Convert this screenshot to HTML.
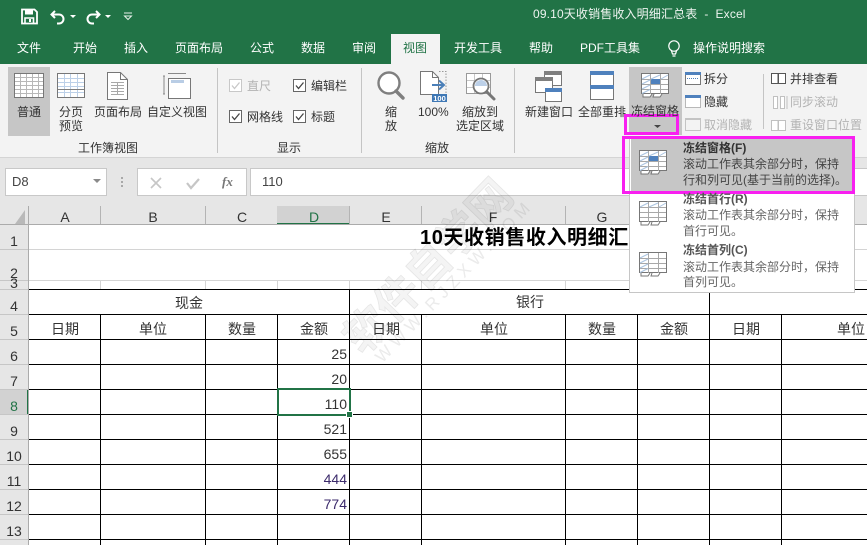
<!DOCTYPE html>
<html lang="zh"><head><meta charset="utf-8"><title>Excel</title>
<style>
html,body{margin:0;padding:0;width:867px;height:545px;overflow:hidden;background:#fff}
#p{position:relative;width:867px;height:545px;overflow:hidden;font-family:"Liberation Sans","Noto Sans CJK SC",sans-serif;font-size:12px;color:#333}
svg.b{position:absolute;left:0;top:0}
.t{position:absolute;white-space:nowrap;line-height:16px;height:16px}
.c{transform:translateX(-50%)}
.r{transform:translateX(-100%)}
.w{color:#fff}
.g{color:#b3b3b3}
.m{color:#666}
.h{font-size:14px;color:#333}
.n{font-size:14px;color:#333}
.k{font-size:14px;color:#333}
#wm{position:absolute;left:0;top:0;width:867px;height:545px;pointer-events:none;mix-blend-mode:multiply}
</style></head><body><div id="p">
<svg class="b" width="867" height="545" viewBox="0 0 867 545" shape-rendering="crispEdges">
<!-- backgrounds -->
<rect width="867" height="64" fill="#217346"/>
<rect x="391" y="34" width="49" height="30" fill="#f3f3f3"/>
<rect y="64" width="867" height="93" fill="#f3f3f3"/>
<rect y="157" width="867" height="48" fill="#e6e6e6"/>
<rect y="157" width="867" height="1" fill="#d4d4d4"/>
<rect x="5.500" y="168.500" width="101" height="27" fill="#fff" stroke="#c8c8c8"/>
<path d="M93 179h8l-4 4z" fill="#8a8a8a" shape-rendering="auto"/>
<rect x="137.500" y="168.500" width="109" height="27" fill="#fff" stroke="#c8c8c8"/>
<rect x="250.500" y="168.500" width="620" height="27" fill="#fff" stroke="#c8c8c8"/>
<g fill="#a8a8a8"><rect x="121" y="177" width="2" height="2"/><rect x="121" y="181" width="2" height="2"/><rect x="121" y="185" width="2" height="2"/></g>
<path d="M151 178l10 10M161 178l-10 10" stroke="#c6c6c6" stroke-width="1.600" shape-rendering="auto" fill="none"/>
<path d="M187 183l4 5 8-9" stroke="#c6c6c6" stroke-width="2.200" shape-rendering="auto" fill="none"/>
<!-- headers -->
<rect y="205" width="867" height="19" fill="#e6e6e6"/>
<rect x="0" y="224" width="28" height="321" fill="#e6e6e6"/>
<path d="M25 210v14H15z" fill="#b9b9b9" shape-rendering="auto"/>
<rect x="277" y="206" width="73" height="18" fill="#d2d2d2"/>
<rect x="277" y="223" width="73" height="2" fill="#217346"/>
<rect x="0" y="389" width="28" height="25" fill="#d2d2d2"/>
<rect x="27" y="389" width="2" height="26" fill="#217346"/>
<rect x="0" y="224" width="867" height="1" fill="#ababab"/>
<rect x="28" y="206" width="1" height="339" fill="#ababab"/>
<g fill="#b4b4b4"><rect x="100" y="206" width="1" height="18"/><rect x="205" y="206" width="1" height="18"/><rect x="421" y="206" width="1" height="18"/><rect x="565" y="206" width="1" height="18"/><rect x="349" y="206" width="1" height="18"/></g>
<g fill="#c6c6c6"><rect y="249" width="28" height="1"/><rect y="280" width="28" height="1"/><rect y="289" width="28" height="1"/><rect y="314" width="28" height="1"/><rect y="339" width="28" height="1"/><rect y="364" width="28" height="1"/><rect y="389" width="28" height="1"/><rect y="414" width="28" height="1"/><rect y="439" width="28" height="1"/><rect y="464" width="28" height="1"/><rect y="489" width="28" height="1"/><rect y="514" width="28" height="1"/><rect y="539" width="28" height="1"/></g>
<!-- light grid -->
<g fill="#d4d4d4"><rect x="29" y="249" width="838" height="1"/><rect x="29" y="280" width="838" height="1"/>
<rect x="100" y="280" width="1" height="9"/><rect x="205" y="280" width="1" height="9"/><rect x="277" y="280" width="1" height="9"/><rect x="349" y="280" width="1" height="9"/><rect x="421" y="280" width="1" height="9"/><rect x="565" y="280" width="1" height="9"/></g>
<!-- black grid -->
<g fill="#000"><rect x="29" y="289" width="838" height="1"/><rect x="29" y="314" width="838" height="1"/><rect x="29" y="339" width="838" height="1"/><rect x="29" y="364" width="838" height="1"/><rect x="29" y="389" width="838" height="1"/><rect x="29" y="414" width="838" height="1"/><rect x="29" y="439" width="838" height="1"/><rect x="29" y="464" width="838" height="1"/><rect x="29" y="489" width="838" height="1"/><rect x="29" y="514" width="838" height="1"/><rect x="29" y="539" width="838" height="1"/>
<rect x="100" y="314" width="1" height="231"/><rect x="205" y="314" width="1" height="231"/><rect x="277" y="314" width="1" height="231"/><rect x="349" y="289" width="1" height="256"/><rect x="421" y="314" width="1" height="231"/><rect x="565" y="314" width="1" height="231"/><rect x="637" y="314" width="1" height="231"/><rect x="709" y="289" width="1" height="256"/><rect x="781" y="314" width="1" height="231"/></g>
<!-- selection -->
<rect x="278" y="389" width="72" height="26" fill="none" stroke="#217346" stroke-width="2"/>
<rect x="346" y="411" width="7" height="7" fill="#fff"/><rect x="347" y="412" width="5" height="5" fill="#217346"/>
<!-- ribbon separators -->
<g fill="#c4c4c4"><rect x="217" y="68" width="1" height="85"/><rect x="361" y="68" width="1" height="85"/><rect x="514" y="68" width="1" height="85"/><rect x="763" y="74" width="1" height="55"/></g>
<!-- highlights -->
<rect x="8" y="67" width="42" height="69" fill="#c6c6c6"/>
<rect x="629" y="67" width="53" height="68" fill="#c6c6c6"/>
<path d="M654 125h7l-3.500 3z" fill="#444" shape-rendering="auto"/>
<!-- QAT icons -->
<g shape-rendering="auto">
<path d="M22 9.500h12.500l2.500 2.500v11.500H22z" fill="none" stroke="#fff" stroke-width="1.800"/>
<rect x="25" y="10" width="8" height="4.500" fill="#fff"/>
<path d="M25 23v-5h8.500v5" fill="none" stroke="#fff" stroke-width="1.600"/><rect x="29" y="19" width="2" height="3" fill="#fff"/>
<path d="M55 11l-3.500 3.500 3.500 3.500M52 14.500h7a4.500 4.500 0 0 1 0 9h-2" fill="none" stroke="#fff" stroke-width="2"/>
<path d="M70 15h6l-3 3z" fill="#fff"/>
<path d="M96 11l3.500 3.500-3.500 3.500M99 14.500h-7a4.500 4.500 0 0 0 0 9h2" fill="none" stroke="#fff" stroke-width="2"/>
<path d="M105 15h6l-3 3z" fill="#fff"/>
<path d="M124 13h8M124.500 16h7l-3.500 3.500z" fill="none" stroke="#e6efe9" stroke-width="1"/>
<!-- bulb -->
<circle cx="674" cy="46" r="5.200" fill="none" stroke="#fff" stroke-width="1.200"/>
<path d="M671.500 51l1 3h3l1-3M672.500 56h3" fill="none" stroke="#fff" stroke-width="1.200"/>
</g>
<!-- normal view icon -->
<rect x="14.500" y="73.500" width="29" height="24" fill="#fff" stroke="#777"/>
<g fill="#b8b8b8"><rect x="15" y="77" width="28" height="1"/><rect x="15" y="81" width="28" height="1"/><rect x="15" y="85" width="28" height="1"/><rect x="15" y="89" width="28" height="1"/><rect x="15" y="93" width="28" height="1"/><rect x="20" y="74" width="1" height="23"/><rect x="26" y="74" width="1" height="23"/><rect x="32" y="74" width="1" height="23"/><rect x="38" y="74" width="1" height="23"/></g>
<!-- page break icon -->
<rect x="57.500" y="73.500" width="27" height="24" fill="#fff" stroke="#777"/>
<g fill="#bcd0e8"><rect x="58" y="78" width="26" height="1"/><rect x="58" y="82" width="26" height="1"/><rect x="58" y="86" width="26" height="1"/><rect x="58" y="92" width="26" height="1"/><rect x="64" y="74" width="1" height="23"/><rect x="70" y="74" width="1" height="23"/><rect x="77" y="74" width="1" height="23"/></g>
<rect x="58" y="89" width="26" height="1" fill="#7f7f7f"/>
<!-- page layout icon -->
<path d="M107.500 72.500h13l7 7v20h-20z" fill="#fff" stroke="#777" shape-rendering="auto"/>
<path d="M120.500 72.500v7h7" fill="none" stroke="#777"/>
<g fill="#a8a8a8"><rect x="111" y="82" width="13" height="1"/><rect x="111" y="85" width="13" height="1"/><rect x="111" y="88" width="13" height="1"/><rect x="111" y="91" width="13" height="1"/><rect x="111" y="94" width="13" height="1"/><rect x="117" y="82" width="1" height="13"/></g>
<!-- custom view icon -->
<rect x="168.500" y="78.500" width="22" height="20" fill="#fff" stroke="#777"/>
<rect x="171" y="80" width="13" height="3" fill="#b9cde5"/>
<path d="M164 76v18M168 73.500h18M163 76h2M163 94h2" stroke="#888" fill="none"/>
<!-- checkboxes -->
<g fill="#fff"><rect x="229.500" y="79.500" width="12" height="12" stroke="#c8c8c8"/><rect x="293.500" y="79.500" width="12" height="12" stroke="#666"/><rect x="229.500" y="110.500" width="12" height="12" stroke="#666"/><rect x="293.500" y="110.500" width="12" height="12" stroke="#666"/></g>
<g fill="none" stroke-width="1.300" shape-rendering="auto"><path d="M232 85.500l2.500 3 5-6" stroke="#c8c8c8"/><path d="M296 85.500l2.500 3 5-6" stroke="#444"/><path d="M232 116.500l2.500 3 5-6" stroke="#444"/><path d="M296 116.500l2.500 3 5-6" stroke="#444"/></g>
<!-- zoom icon -->
<g shape-rendering="auto">
<circle cx="389" cy="83" r="10.500" fill="#fff" stroke="#7f7f7f" stroke-width="2.400"/>
<path d="M396 91l7 7" stroke="#7f7f7f" stroke-width="3.400" stroke-linecap="round"/>
<path d="M420.500 71.500h12l6 6v17h-18z" fill="#fff" stroke="#777"/>
<path d="M432.500 71.500v6h6" fill="none" stroke="#777"/>
<path d="M439 71.500h7v22" fill="none" stroke="#999" stroke-dasharray="1.500 1.500"/>
<path d="M432 85h12M439 80.500l5 4.500-5 4.500" fill="none" stroke="#4a7fb8" stroke-width="2"/>
</g>
<rect x="432" y="94" width="15" height="8" fill="#3f78b5"/>
<text x="439.500" y="101" font-family="'Liberation Sans',sans-serif" font-size="7.500" font-weight="700" fill="#fff" text-anchor="middle" shape-rendering="auto">100</text>
<rect x="466.500" y="73.500" width="24" height="20" fill="#fff" stroke="#999"/>
<g fill="#c8c8c8"><rect x="467" y="80" width="23" height="1"/><rect x="467" y="87" width="23" height="1"/><rect x="474" y="74" width="1" height="19"/><rect x="482" y="74" width="1" height="19"/></g>
<g shape-rendering="auto"><circle cx="481" cy="86" r="7.500" fill="#fff" stroke="#777" stroke-width="1.800"/>
<path d="M475 86a6 6 0 0 1 12 0z" fill="#bcd0e8"/>
<path d="M487 92l7 7" stroke="#777" stroke-width="3" stroke-linecap="round"/></g>
<!-- new window -->
<rect x="544.500" y="71.500" width="17" height="14" fill="#fff" stroke="#777"/><rect x="544" y="71" width="18" height="4" fill="#7f7f7f"/>
<rect x="535.500" y="77.500" width="17" height="15" fill="#fff" stroke="#777"/><rect x="535" y="77" width="18" height="4" fill="#7f7f7f"/>
<rect x="545.500" y="88.500" width="16" height="13" fill="#fff" stroke="#777"/><rect x="545" y="88" width="17" height="4" fill="#4f81bd"/>
<!-- arrange -->
<rect x="590.500" y="71.500" width="23" height="28" fill="#fff" stroke="#777"/><rect x="590" y="71" width="24" height="4" fill="#4f81bd"/><rect x="590" y="85" width="24" height="4" fill="#4f81bd"/>
<!-- freeze icon top -->
<rect x="641.500" y="73.500" width="27" height="20" fill="#fff" stroke="#777"/>
<g fill="#a8a8a8"><rect x="642" y="79" width="26" height="1"/><rect x="642" y="84" width="26" height="1"/><rect x="642" y="89" width="26" height="1"/><rect x="650" y="74" width="1" height="20"/><rect x="660" y="74" width="1" height="20"/></g>
<rect x="651" y="79" width="9" height="5" fill="#4f81bd"/>
<path d="M642 79l8-4M651 79l9-4M661 79l7-4M642 84l8-4M642 89l8-4M642 93.500l8-4" stroke="#a9c3e0" shape-rendering="auto"/>
<path d="M643 94v3h7l2-3M654 94l-1 3h7l2-3" fill="#fff" stroke="#777" shape-rendering="auto"/>
<!-- split/hide -->
<rect x="685.500" y="72.500" width="15" height="12" fill="#fff" stroke="#777"/><rect x="685" y="72" width="16" height="3" fill="#4f81bd"/><path d="M687 78.500h12" stroke="#4f81bd" stroke-dasharray="1 1"/>
<rect x="685.500" y="95.500" width="15" height="12" fill="#fff" stroke="#777" stroke-dasharray="1 1"/><rect x="685" y="95" width="16" height="3" fill="#4f81bd"/>
<rect x="685.500" y="118.500" width="15" height="12" fill="none" stroke="#c4c4c4"/><rect x="685" y="118" width="16" height="2" fill="#c4c4c4"/>
<!-- side by side -->
<path d="M771.500 73.500h6.500v10h-6.500zM778.500 73.500h7v10h-7z" fill="#fff" stroke="#555"/>
<path d="M773.500 96.500h4v12h-4zM780.500 96.500h4v12h-4z" fill="#fff" stroke="#c0c0c0"/>
<path d="M787 96v13" stroke="#c0c0c0"/>
<path d="M771.500 120.500h6.500v10h-6.500zM778.500 120.500h7v10h-7z" fill="#fff" stroke="#c0c0c0"/>
<!-- menu -->
<rect x="629.500" y="136.500" width="225" height="156" fill="#fff" stroke="#c6c6c6"/>
<rect x="631" y="138" width="222" height="53" fill="#c6c6c6"/>
<rect x="623.500" y="137.500" width="230" height="55" fill="none" stroke="#f81ff0" stroke-width="3"/>
<rect x="625.500" y="115.500" width="52" height="18" fill="none" stroke="#f81ff0" stroke-width="3"/>
<!-- menu icon 1 -->
<rect x="639.500" y="150.500" width="27" height="20" fill="#fff" stroke="#777"/>
<g fill="#a8a8a8"><rect x="640" y="156" width="26" height="1"/><rect x="640" y="161" width="26" height="1"/><rect x="640" y="166" width="26" height="1"/><rect x="648" y="151" width="1" height="20"/><rect x="658" y="151" width="1" height="20"/></g>
<rect x="649" y="156" width="9" height="5" fill="#4f81bd"/>
<path d="M640 156l8-4M649 156l9-4M659 156l7-4M640 161l8-4M640 166l8-4M640 170.500l8-4" stroke="#a9c3e0" shape-rendering="auto"/>
<path d="M641 171v3h7l2-3M652 171l-1 3h7l2-3" fill="#fff" stroke="#777" shape-rendering="auto"/>
<!-- menu icon 2 -->
<rect x="639.500" y="201.500" width="27" height="20" fill="#fff" stroke="#777"/>
<g fill="#a8a8a8"><rect x="640" y="207" width="26" height="1"/><rect x="640" y="212" width="26" height="1"/><rect x="640" y="217" width="26" height="1"/><rect x="648" y="202" width="1" height="20"/><rect x="658" y="202" width="1" height="20"/></g>
<path d="M640 207l8-4M649 207l9-4M659 207l7-4" stroke="#a9c3e0" shape-rendering="auto"/>
<path d="M641 222v3h7l2-3M652 222l-1 3h7l2-3" fill="#fff" stroke="#777" shape-rendering="auto"/>
<!-- menu icon 3 -->
<rect x="639.500" y="252.500" width="27" height="20" fill="#fff" stroke="#777"/>
<g fill="#a8a8a8"><rect x="640" y="258" width="26" height="1"/><rect x="640" y="263" width="26" height="1"/><rect x="640" y="268" width="26" height="1"/><rect x="648" y="253" width="1" height="20"/><rect x="658" y="253" width="1" height="20"/></g>
<path d="M640 258l8-4M640 263l8-4M640 268l8-4M640 272.500l8-4" stroke="#a9c3e0" shape-rendering="auto"/>
<path d="M641 273v3h7l2-3M652 273l-1 3h7l2-3" fill="#fff" stroke="#777" shape-rendering="auto"/>
</svg>

<!-- title bar -->
<div class="t" style="left:533px;top:6px;color:#eef4f0;letter-spacing:.15px">09.10天收销售收入明细汇总表&nbsp; - &nbsp;Excel</div>
<!-- tabs -->
<div class="t w" style="left:17px;top:40px">文件</div>
<div class="t w" style="left:73px;top:40px">开始</div>
<div class="t w" style="left:124px;top:40px">插入</div>
<div class="t w" style="left:175px;top:40px">页面布局</div>
<div class="t w" style="left:250px;top:40px">公式</div>
<div class="t w" style="left:301px;top:40px">数据</div>
<div class="t w" style="left:352px;top:40px">审阅</div>
<div class="t" style="left:403px;top:40px;color:#217346">视图</div>
<div class="t w" style="left:454px;top:40px">开发工具</div>
<div class="t w" style="left:529px;top:40px">帮助</div>
<div class="t w" style="left:580px;top:40px">PDF工具集</div>
<div class="t w" style="left:693px;top:40px">操作说明搜索</div>
<!-- ribbon text -->
<div class="t" style="left:17px;top:104px">普通</div>
<div class="t" style="left:59px;top:104px">分页</div>
<div class="t" style="left:59px;top:118px">预览</div>
<div class="t" style="left:94px;top:104px">页面布局</div>
<div class="t" style="left:147px;top:104px">自定义视图</div>
<div class="t" style="left:78px;top:140px">工作簿视图</div>
<div class="t g" style="left:247px;top:78px">直尺</div>
<div class="t" style="left:311px;top:78px">编辑栏</div>
<div class="t" style="left:247px;top:109px">网格线</div>
<div class="t" style="left:311px;top:109px">标题</div>
<div class="t" style="left:277px;top:140px">显示</div>
<div class="t" style="left:385px;top:104px">缩</div>
<div class="t" style="left:385px;top:118px">放</div>
<div class="t" style="left:418px;top:104px">100%</div>
<div class="t" style="left:462px;top:104px">缩放到</div>
<div class="t" style="left:456px;top:118px">选定区域</div>
<div class="t" style="left:425px;top:140px">缩放</div>
<div class="t" style="left:525px;top:104px">新建窗口</div>
<div class="t" style="left:578px;top:104px">全部重排</div>
<div class="t" style="left:631px;top:103px">冻结窗格</div>
<div class="t" style="left:704px;top:71px">拆分</div>
<div class="t" style="left:704px;top:94px">隐藏</div>
<div class="t g" style="left:704px;top:117px">取消隐藏</div>
<div class="t" style="left:790px;top:71px">并排查看</div>
<div class="t g" style="left:790px;top:94px">同步滚动</div>
<div class="t g" style="left:790px;top:117px">重设窗口位置</div>
<!-- formula bar -->
<div class="t" style="left:12px;top:174px;font-size:13px;color:#444">D8</div>
<div class="t" style="left:222px;top:174px;font:italic bold 13px 'Liberation Serif',serif;line-height:16px;color:#777">fx</div>
<div class="t" style="left:262px;top:174px;font-size:13px;color:#444">110</div>
<!-- column headers -->
<div class="t h c" style="left:65px;top:209px">A</div>
<div class="t h c" style="left:153px;top:209px">B</div>
<div class="t h c" style="left:242px;top:209px">C</div>
<div class="t h c" style="left:314px;top:209px;color:#217346">D</div>
<div class="t h c" style="left:386px;top:209px">E</div>
<div class="t h c" style="left:493px;top:209px">F</div>
<div class="t h c" style="left:602px;top:209px">G</div>
<!-- row headers -->
<div class="t n c" style="left:14px;top:233px">1</div>
<div class="t n c" style="left:14px;top:265px">2</div>
<div class="t n c" style="left:14px;top:275px">3</div>
<div class="t n c" style="left:14px;top:298px">4</div>
<div class="t n c" style="left:14px;top:323px">5</div>
<div class="t n c" style="left:14px;top:348px">6</div>
<div class="t n c" style="left:14px;top:373px">7</div>
<div class="t n c" style="left:14px;top:398px;color:#217346">8</div>
<div class="t n c" style="left:14px;top:423px">9</div>
<div class="t n c" style="left:14px;top:448px">10</div>
<div class="t n c" style="left:14px;top:473px">11</div>
<div class="t n c" style="left:14px;top:498px">12</div>
<div class="t n c" style="left:14px;top:523px">13</div>
<!-- sheet -->
<div class="t" style="left:420px;top:226px;height:24px;line-height:24px;font-size:20px;font-weight:bold;color:#000;width:209px;overflow:hidden;letter-spacing:.6px">10天收销售收入明细汇</div>
<div class="t k c" style="left:189px;top:295px">现金</div>
<div class="t k c" style="left:530px;top:294px">银行</div>
<div class="t k c" style="left:65px;top:321px">日期</div>
<div class="t k c" style="left:153px;top:321px">单位</div>
<div class="t k c" style="left:242px;top:321px">数量</div>
<div class="t k c" style="left:314px;top:321px">金额</div>
<div class="t k c" style="left:386px;top:321px">日期</div>
<div class="t k c" style="left:494px;top:321px">单位</div>
<div class="t k c" style="left:602px;top:321px">数量</div>
<div class="t k c" style="left:674px;top:321px">金额</div>
<div class="t k c" style="left:746px;top:321px">日期</div>
<div class="t k c" style="left:851px;top:321px">单位</div>
<div class="t k r" style="left:347px;top:346px">25</div>
<div class="t k r" style="left:347px;top:371px">20</div>
<div class="t k r" style="left:347px;top:396px">110</div>
<div class="t k r" style="left:347px;top:421px">521</div>
<div class="t k r" style="left:347px;top:446px">655</div>
<div class="t k r" style="left:347px;top:471px;color:#3b2a6b">444</div>
<div class="t k r" style="left:347px;top:496px;color:#3b2a6b">774</div>
<!-- menu text -->
<div class="t" style="left:683px;top:140px;font-weight:bold;color:#333">冻结窗格(F)</div>
<div class="t" style="left:683px;top:156px;color:#444">滚动工作表其余部分时，保持</div>
<div class="t" style="left:683px;top:172px;color:#444">行和列可见(基于当前的选择)。</div>
<div class="t" style="left:683px;top:191px;font-weight:bold;color:#555">冻结首行(R)</div>
<div class="t m" style="left:683px;top:207px">滚动工作表其余部分时，保持</div>
<div class="t m" style="left:683px;top:223px">首行可见。</div>
<div class="t" style="left:683px;top:242px;font-weight:bold;color:#555">冻结首列(C)</div>
<div class="t m" style="left:683px;top:259px">滚动工作表其余部分时，保持</div>
<div class="t m" style="left:683px;top:274px">首列可见。</div>
<!-- watermark -->
<svg id="wm" width="867" height="545" viewBox="0 0 867 545">
<g transform="translate(363,356) rotate(-46)">
<text x="0" y="0" font-family="'Noto Sans CJK SC',sans-serif" font-size="44" font-weight="700" fill="#f4f4f4" stroke="#e6e6e6" stroke-width=".8">软件自学网</text>
<text x="8" y="19" font-family="'Liberation Sans',sans-serif" font-size="17" fill="#ebebeb" letter-spacing="5">WWW.RJZXW.COM</text>
</g>
</svg>
</div></body></html>
